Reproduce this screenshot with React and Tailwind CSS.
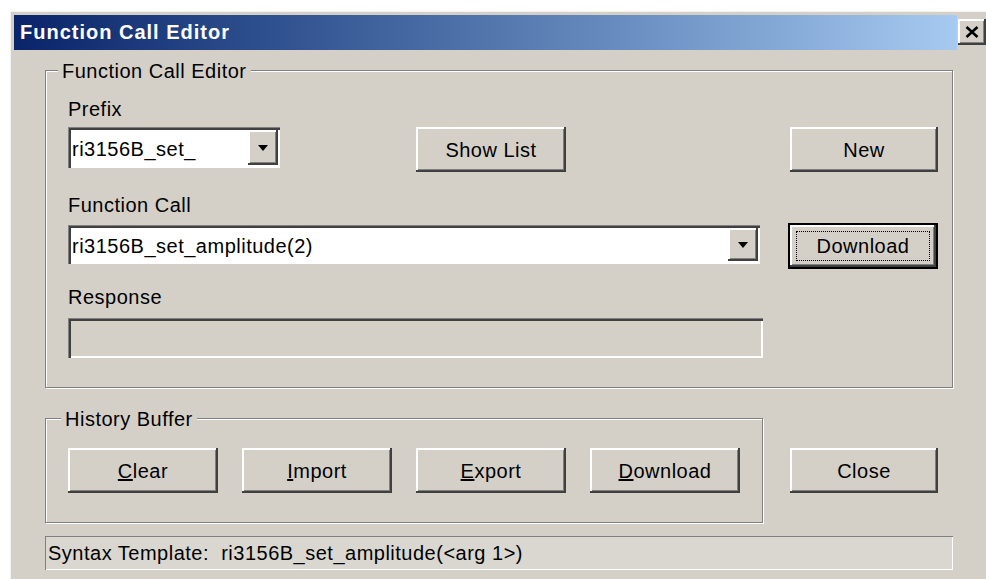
import React from 'react';

// classic 3D bevels
const raised = 'shadow-[inset_-2px_-2px_0_#404040,inset_2px_2px_0_#ffffff,inset_-3px_-3px_0_#808080]';
const sunken = 'shadow-[inset_1px_1px_0_#808080,inset_3px_3px_0_#404040,inset_-2px_-2px_0_#ffffff]';

function Button({ className = '', children }) {
  return (
    <button className={`flex items-center justify-center bg-[#d4d0c8] h-[45px] ${raised} ${className}`}>
      {children}
    </button>
  );
}

function DropArrow() {
  return (
    <div className={`flex items-center justify-center w-[30px] my-[3px] mr-[2px] bg-[#d4d0c8] ${raised}`}>
      <svg width="10" height="6" viewBox="0 0 10 6">
        <polygon points="0,0 10,0 5,6" fill="#000" />
      </svg>
    </div>
  );
}

function Combo({ className = '', value }) {
  return (
    <div className={`flex bg-white ${sunken} ${className}`}>
      <div className="flex-1 flex items-center pl-[4px] pt-[2px]">{value}</div>
      <DropArrow />
    </div>
  );
}

function GroupBox({ title, titleLeft, className = '', children }) {
  return (
    <div className={`relative border border-[#808080] shadow-[inset_1px_1px_0_#ffffff,1px_1px_0_#ffffff] ${className}`}>
      <span className={`absolute -top-[11px] ${titleLeft} px-[4px] leading-[22px] bg-[#d4d0c8]`}>{title}</span>
      {children}
    </div>
  );
}

export default function App() {
  return (
    <div className="w-[986px] h-[579px] overflow-hidden bg-white pt-[11px] pl-[10px] font-['Liberation_Sans',Arial,sans-serif] text-[20px] tracking-[0.5px] text-black">
      <div className="h-full bg-[#d4d0c8] pt-[4px] pl-[4px] shadow-[inset_1px_1px_0_#f4f3f0]">
        {/* caption bar */}
        <div className="flex items-start">
          <div className="w-[943px] h-[35px] pl-[6px] leading-[35px] bg-linear-to-r from-[#0a246a] to-[#a6caf0] text-white font-bold tracking-[1px]">
            Function Call Editor
          </div>
          <button className={`ml-[1px] mt-[4px] w-[28px] h-[26px] flex items-center justify-center bg-[#d4d0c8] ${raised}`}>
            <svg width="14" height="12" viewBox="0 0 14 12">
              <path d="M1.5 1 L12.5 11 M12.5 1 L1.5 11" stroke="#000" strokeWidth="2.6" />
            </svg>
          </button>
        </div>

        <div className="pl-[31px]">
          <GroupBox title="Function Call Editor" titleLeft="left-[12px]" className="mt-[20px] w-[908px] pt-[27px] pl-[22px] pb-[29px]">
            <div className="leading-[22px]">Prefix</div>
            <div className="mt-[7px] flex items-start">
              <Combo className="w-[212px] h-[41px]" value="ri3156B_set_" />
              <Button className="ml-[136px] w-[150px]">Show List</Button>
              <Button className="ml-[224px] w-[148px]">New</Button>
            </div>

            <div className="mt-[22px] leading-[22px]">Function Call</div>
            <div className="mt-[7px] flex items-start">
              <Combo className="mt-[2px] w-[692px] h-[39px]" value="ri3156B_set_amplitude(2)" />
              <button className="ml-[28px] w-[150px] h-[46px] border-2 border-black bg-[#d4d0c8] flex">
                <div className={`flex-1 flex p-[6px] ${raised}`}>
                  <div className="flex-1 flex items-center justify-center border border-dotted border-black">
                    Download
                  </div>
                </div>
              </button>
            </div>

            <div className="mt-[17px] leading-[22px]">Response</div>
            <div className={`mt-[10px] w-[695px] h-[40px] bg-[#d4d0c8] ${sunken}`} />
          </GroupBox>

          <div className="mt-[30px] flex items-start">
            <GroupBox title="History Buffer" titleLeft="left-[15px]" className="w-[718px] pt-[29px] pl-[22px] pb-[29px]">
              <div className="flex gap-[24px]">
                <Button className="w-[150px]"><span className="underline">C</span>lear</Button>
                <Button className="w-[150px]"><span className="underline">I</span>mport</Button>
                <Button className="w-[150px]"><span className="underline">E</span>xport</Button>
                <Button className="w-[150px]"><span className="underline">D</span>ownload</Button>
              </div>
            </GroupBox>
            <Button className="ml-[27px] mt-[30px] w-[148px]">Close</Button>
          </div>

          <div className="mt-[13px] w-[908px] h-[34px] flex items-center pl-[3px] bg-[#dad7d0] shadow-[inset_1px_1px_0_#808080,inset_-1px_-1px_0_#ffffff] whitespace-pre">
            {'Syntax Template:  ri3156B_set_amplitude(<arg 1>)'}
          </div>
        </div>
      </div>
    </div>
  );
}
